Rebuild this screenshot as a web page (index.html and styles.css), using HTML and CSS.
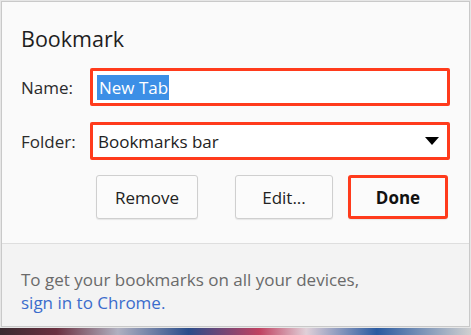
FILE: index.html
```html
<!DOCTYPE html>
<html>
<head>
<meta charset="utf-8">
<link rel="stylesheet" href="styles.css">
</head>
<body>
<div class="page">
  <div class="dialog">
    <div class="main">
      <h1 class="title">Bookmark</h1>
      <div class="row row-name">
        <span class="label">Name:</span>
        <div class="field field-name"><span class="sel">New Tab</span></div>
      </div>
      <div class="row row-folder">
        <span class="label">Folder:</span>
        <div class="field field-select">
          <span class="value">Bookmarks bar</span>
          <svg class="caret" width="14" height="8" viewBox="0 0 14 8"><polygon points="0,0 14,0 7,8" fill="#000"/></svg>
        </div>
      </div>
      <div class="buttons">
        <button class="btn btn-remove">Remove</button>
        <button class="btn btn-edit">Edit...</button>
        <button class="btn btn-done">Done</button>
      </div>
    </div>
    <div class="footer">
      <p class="note">To get your bookmarks on all your devices,<br><span class="link">sign in to Chrome.</span></p>
    </div>
  </div>
  <div class="bottom-strip"></div>
</div>
</body>
</html>
```
FILE: styles.css
```css
* { box-sizing: border-box; }
html, body { margin: 0; padding: 0; }
body {
  width: 471px;
  height: 335px;
  overflow: hidden;
  background: #e6e6e6;
  font-family: "Open Sans", "Noto Sans", sans-serif;
}
.page {
  position: relative;
  width: 471px;
  height: 335px;
  padding: 1px 0 0 1px;
}
.dialog {
  width: 469px;
  height: 326px;
  border: 1px solid #c9c9c9;
  background: #fafafa;
  display: flex;
  flex-direction: column;
}
.main {
  padding: 0 0 0 19px;
  height: 241px;
}
.title {
  margin: 0;
  padding-top: 22px;
  height: 66px;
  font-weight: 400;
  font-size: 21.5px;
  line-height: 30px;
  color: #1e1e1e;
}
.row {
  display: flex;
  align-items: center;
}
.row-name { height: 38px; }
.row-folder { height: 38px; margin-top: 16px; }
.label {
  width: 69px;
  font-size: 17px;
  color: #2b2b2b;
}
.field {
  width: 360px;
  height: 38px;
  border: 3px solid #ff3b1c;
  border-radius: 2px;
  background: #fff;
  display: flex;
  align-items: center;
  font-size: 17px;
  color: #222;
}
.field-name { padding-left: 4px; }
.sel {
  background: #3c8fe6;
  color: #fff;
  line-height: 25px;
  padding: 0 1px 0 2px;
}
.field-select {
  padding: 0 6px 0 5px;
  justify-content: space-between;
}
.value { line-height: 25px; }
.caret { margin-right: 2px; }
.buttons {
  display: flex;
  margin-top: 15px;
  padding-left: 75px;
}
.btn {
  height: 44px;
  font-family: inherit;
  font-size: 17px;
  color: #222;
  background: #fbfbfb;
  border: 1px solid #cfcfcf;
  border-radius: 3px;
  box-shadow: 0 1px 1px rgba(0,0,0,0.08);
  padding: 0;
}
.btn-remove { width: 102px; margin-right: 37px; }
.btn-edit { width: 98px; margin-right: 15px; }
.btn-done {
  width: 100px;
  border: 3px solid #ff3b1c;
  font-weight: 700;
  color: #111;
}
.footer {
  flex: 1;
  border-top: 1px solid #dedede;
  background: #f3f3f3;
  padding: 24px 0 0 19px;
}
.note {
  margin: 0;
  font-size: 17px;
  line-height: 23px;
  color: #6a6a6a;
}
.link { color: #3b6ccc; }
.bottom-strip {
  position: absolute;
  left: 0;
  top: 328px;
  width: 471px;
  height: 7px;
  background: linear-gradient(90deg, #3a2a30 0%, #6b3040 12%, #b0b0c0 25%, #2a4c8a 40%, #c04060 55%, #e0d0d8 65%, #2a5aa0 80%, #d0d0d0 100%);
}
```
